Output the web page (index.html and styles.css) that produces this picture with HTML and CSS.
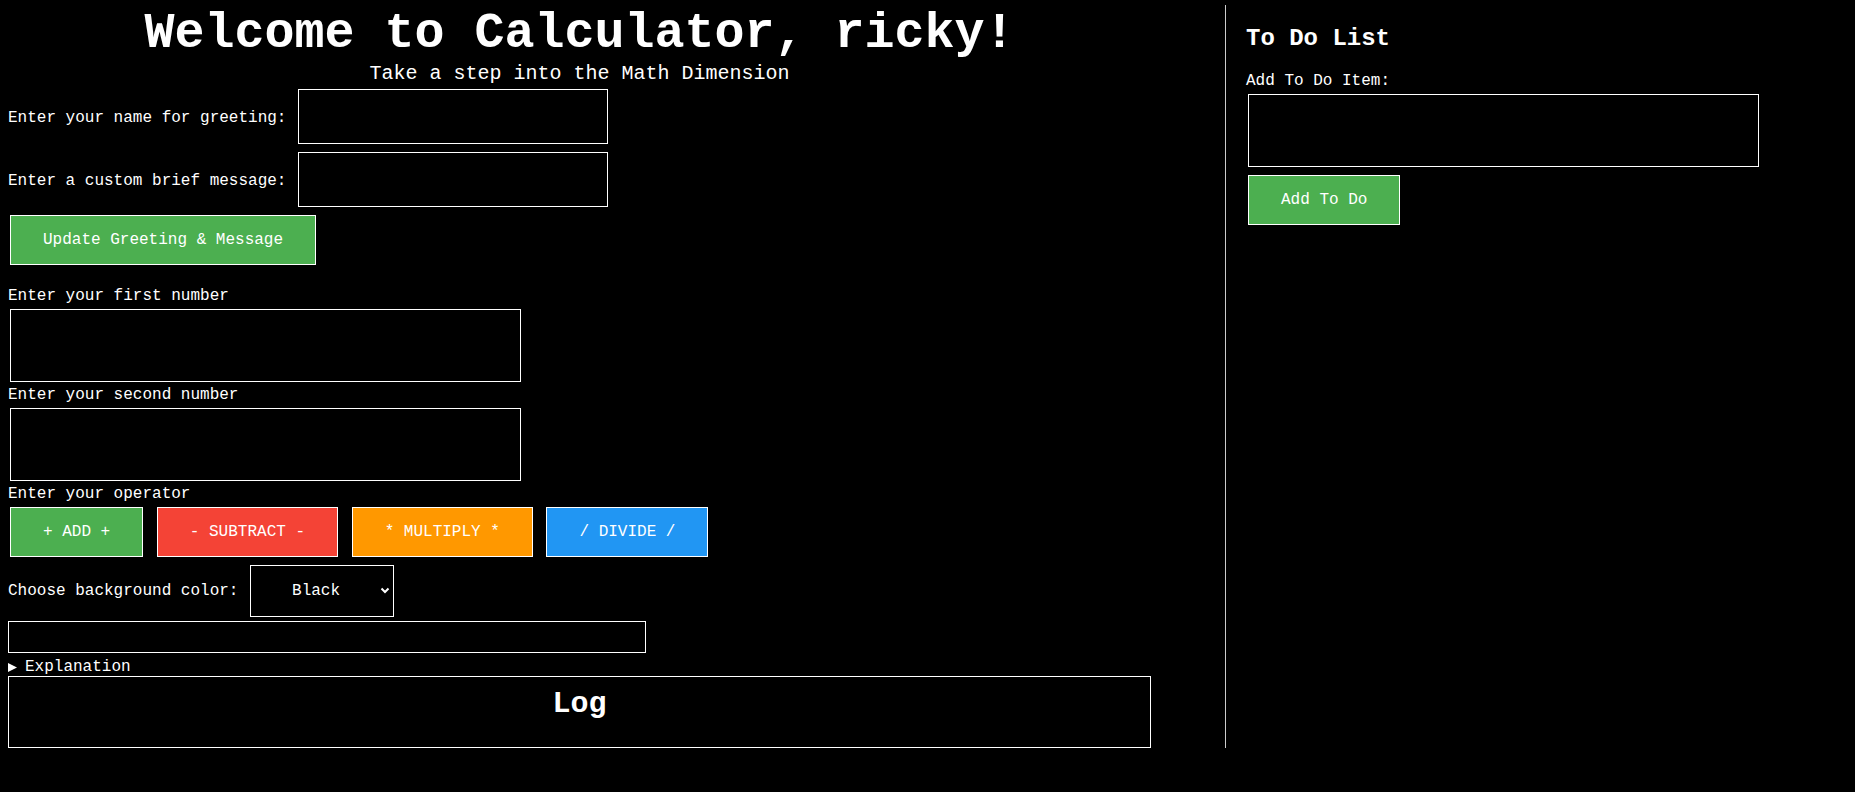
FILE: index.html
```html
<!DOCTYPE html>
<html lang="en">
<head>
<meta charset="utf-8">
<title>Calculator</title>
<link rel="stylesheet" href="styles.css">
</head>
<body>
<div class="page">
  <main class="calc">
    <h1 class="title">Welcome to Calculator, ricky!</h1>
    <p class="subtitle">Take a step into the Math Dimension</p>

    <div class="field-row">
      <label class="row-label" for="name">Enter your name for greeting:</label>
      <input class="text-input short" id="name" type="text">
    </div>
    <div class="field-row">
      <label class="row-label" for="msg">Enter a custom brief message:</label>
      <input class="text-input short" id="msg" type="text">
    </div>
    <button class="btn btn-green" type="button">Update Greeting &amp; Message</button>

    <label class="field-label first" for="n1">Enter your first number</label>
    <input class="text-input wide" id="n1" type="text">
    <label class="field-label" for="n2">Enter your second number</label>
    <input class="text-input wide" id="n2" type="text">
    <label class="field-label">Enter your operator</label>
    <div class="op-row">
      <button class="btn btn-green" type="button">+ ADD +</button>
      <button class="btn btn-red" type="button">- SUBTRACT -</button>
      <button class="btn btn-orange" type="button">* MULTIPLY *</button>
      <button class="btn btn-blue" type="button">/ DIVIDE /</button>
    </div>

    <div class="field-row">
      <label class="row-label color-label" for="bg">Choose background color:</label>
      <div class="select-wrap">
        <select class="color-select" id="bg">
          <option>Black</option>
          <option>White</option>
          <option>Blue</option>
        </select>
        <svg class="chevron" width="10" height="7" viewBox="0 0 10 7" aria-hidden="true"><polyline points="1.5,1.5 5,5 8.5,1.5" fill="none" stroke="#fff" stroke-width="2"/></svg>
      </div>
    </div>

    <div class="result"></div>

    <details class="explain">
      <summary class="explain-summary"><svg class="marker" width="9" height="9" viewBox="0 0 9 9" aria-hidden="true"><polygon points="0,0 9,4.5 0,9" fill="#fff"/></svg><span>Explanation</span></summary>
      <p>Pick two numbers and an operator.</p>
    </details>

    <div class="log">
      <div class="log-title">Log</div>
    </div>
  </main>

  <aside class="todo">
    <h2 class="todo-title">To Do List</h2>
    <label class="field-label" for="todo">Add To Do Item:</label>
    <input class="text-input wide" id="todo" type="text">
    <button class="btn btn-green" type="button">Add To Do</button>
  </aside>
</div>
</body>
</html>
```

FILE: styles.css
```css
html, body {
  margin: 0;
  background: #000;
  color: #fff;
  font-family: "Liberation Mono", "Courier New", monospace;
  font-size: 16px;
}

.page {
  display: flex;
  align-items: stretch;
  padding: 5px 8px;
}

.calc {
  flex: 0 0 1143px;
  display: flex;
  flex-direction: column;
  align-items: flex-start;
}

.title {
  align-self: stretch;
  margin: 0;
  font-size: 50px;
  font-weight: bold;
  line-height: normal;
  text-align: center;
}

.subtitle {
  align-self: stretch;
  margin: 0;
  font-size: 20px;
  line-height: normal;
  text-align: center;
}

.field-row {
  display: flex;
  align-items: center;
  gap: 9.6px;
}

.row-label {
  padding-top: 3px;
}

.color-label {
  padding-top: 0;
}

.field-label {
  display: block;
  line-height: normal;
}

.field-label.first {
  margin-top: 18px;
}

.text-input {
  box-sizing: border-box;
  margin: 4px 2px;
  background: #000;
  color: #fff;
  border: 1px solid #fff;
  border-radius: 0;
  font-family: inherit;
  font-size: 16px;
  padding: 0 12px;
  outline: none;
}

.text-input.short {
  width: 310px;
  height: 55px;
}

.text-input.wide {
  width: 511px;
  height: 73px;
}

.btn {
  margin: 4px 2px;
  padding: 15px 32px;
  border: 1px solid #fff;
  border-radius: 0;
  color: #fff;
  font-family: "Liberation Mono", "Courier New", monospace;
  font-size: 16px;
  line-height: normal;
  text-align: center;
  cursor: pointer;
}

.btn-green { background: #4caf50; }
.btn-red { background: #f44336; }
.btn-orange { background: #ff9800; }
.btn-blue { background: #2196f3; }

.op-row {
  display: flex;
  gap: 9.6px;
}

.select-wrap {
  position: relative;
  margin: 4px 2px;
}

.color-select {
  appearance: none;
  -webkit-appearance: none;
  box-sizing: border-box;
  width: 144px;
  height: 52px;
  padding: 0 0 0 41px;
  margin: 0;
  background: #000;
  color: #fff;
  border: 1px solid #fff;
  border-radius: 0;
  font-family: inherit;
  font-size: 16px;
  outline: none;
}

.chevron {
  position: absolute;
  left: 130px;
  top: 22px;
  pointer-events: none;
}

.result {
  box-sizing: border-box;
  width: 638px;
  height: 32px;
  border: 1px solid #fff;
  margin-bottom: 5px;
}

.explain {
  line-height: 18px;
}

.explain-summary {
  display: flex;
  align-items: center;
  list-style: none;
  cursor: pointer;
}

.explain-summary::-webkit-details-marker {
  display: none;
}

.marker {
  margin-right: 8px;
}

.log {
  align-self: stretch;
  box-sizing: border-box;
  height: 72px;
  border: 1px solid #fff;
  padding-top: 10px;
  text-align: center;
}

.log-title {
  font-size: 30px;
  font-weight: bold;
  line-height: normal;
}

.todo {
  flex: 1 1 auto;
  margin-left: 74px;
  border-left: 1px solid #ccc;
  padding-left: 20px;
  display: flex;
  flex-direction: column;
  align-items: flex-start;
}

.todo-title {
  margin: 0.83em 0;
  font-size: 24px;
  font-weight: bold;
  line-height: normal;
}
```
